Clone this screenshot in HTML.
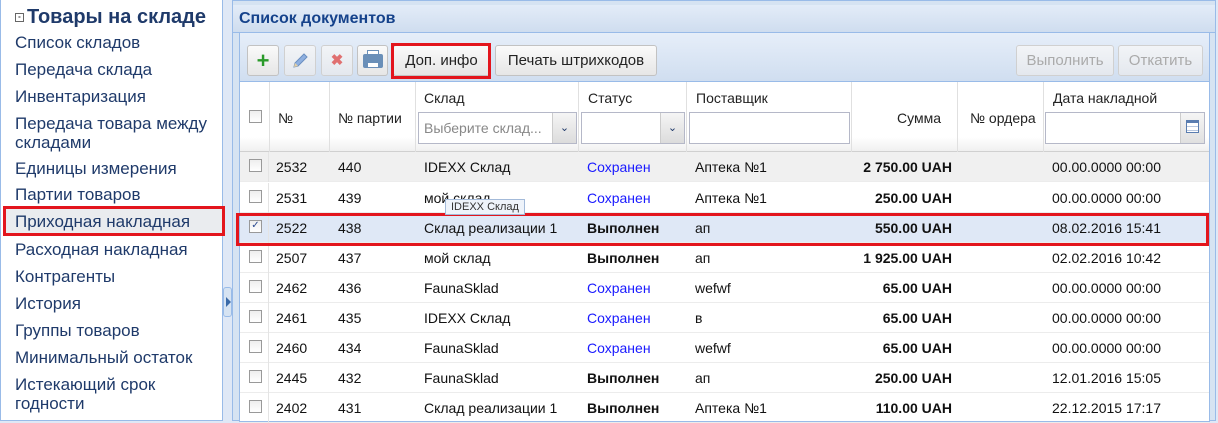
<!DOCTYPE html>
<html><head><meta charset="utf-8"><style>
*{box-sizing:border-box;margin:0;padding:0}
body{width:1218px;height:421px;overflow:hidden;background:#dfe8f6;font-family:"Liberation Sans",Arial,sans-serif;font-size:14px;position:relative}
.abs{position:absolute}
#side{left:0;top:0;width:223px;height:421px;background:#fff;border:1px solid #99bbe8;border-top:none}
.si{position:absolute;left:14px;color:#1f3a6a;font-size:17px;line-height:19px;white-space:nowrap}
#panel{left:232px;top:0;width:984px;height:421px;background:#d6e3f2;border:1px solid #99bbe8}
#ph{left:0;top:4px;width:982px;height:28px;background:linear-gradient(#e3ecf8,#cfddef);border-bottom:1px solid #99bbe8;font-weight:bold;color:#15428b;font-size:16px;padding:5px 6px}
#grid{left:6px;top:31px;width:971px;height:390px;background:#fff;border:1px solid #99bbe8}
#tb{left:0;top:0;width:969px;height:49px;background:linear-gradient(#e6eef9,#d0def0);border-bottom:1px solid #99bbe8}
.btn{position:absolute;top:12px;height:31px;border:1px solid #c2c2c2;border-radius:3px;background:linear-gradient(#fafafa,#e6e6e6);font-size:15px;color:#222;text-align:center;line-height:29px}
.dis{color:#aaa;border-color:#d0d0d0;background:linear-gradient(#f2f4f7,#e4e8ee)}
#hd{left:0;top:49px;width:969px;height:70px;background:linear-gradient(#fff 80%,#f0f0f0);border-bottom:1px solid #d0d0d0}
.hc{position:absolute;top:0;height:70px;border-left:1px solid #e0e0e0;font-size:14px;color:#222}
.inp{position:absolute;height:32px;border:1px solid #b5b8c8;background:#fff}
.trig{position:absolute;right:0;top:0;width:24px;height:30px;background:linear-gradient(#f5f5f5,#dcdcdc);border-left:1px solid #ccc;font-size:11px;color:#1f3a6a;text-align:center;line-height:30px}
.row{position:absolute;left:0;width:969px;height:30px;border-bottom:1px solid #ececec;font-size:14px;color:#111}
.row span{position:absolute;top:7px;white-space:nowrap}
.cb{position:absolute;left:9px;top:7px;width:13px;height:13px;border:1px solid #999;background:linear-gradient(#eee,#fff)}
.cs{position:absolute;left:28px;top:0;height:30px;border-left:1px solid #e4e4e4}
.blue{color:#1a1aff}
.b{font-weight:bold}
.red{position:absolute;border:3px solid #e3151d}
</style></head><body>
<div id="side" class="abs">
<div class="si" style="top:8px;font-weight:bold;font-size:20px;left:14px"><span style="display:inline-block;width:9px;height:9px;border:1px solid #666;font-size:8px;line-height:6px;text-align:center;vertical-align:middle;margin-right:3px;color:#333">-</span>Товары на складе</div>
<div class="si" style="top:33px">Список складов</div>
<div class="si" style="top:60px">Передача склада</div>
<div class="si" style="top:87px">Инвентаризация</div>
<div class="si" style="top:114px">Передача товара между<br>складами</div>
<div class="si" style="top:159px">Единицы измерения</div>
<div class="si" style="top:185px">Партии товаров</div>
<div class="abs" style="left:3px;top:207px;width:219px;height:28px;background:#eaecef"></div>
<div class="si" style="top:212px">Приходная накладная</div>
<div class="red" style="left:2px;top:206px;width:222px;height:30px"></div>
<div class="si" style="top:240px">Расходная накладная</div>
<div class="si" style="top:267px">Контрагенты</div>
<div class="si" style="top:294px">История</div>
<div class="si" style="top:321px">Группы товаров</div>
<div class="si" style="top:348px">Минимальный остаток</div>
<div class="si" style="top:375px">Истекающий срок<br>годности</div>
</div>
<div class="abs" style="left:223px;top:287px;width:9px;height:30px;background:#d6e3f2;border:1px solid #99bbe8;border-radius:3px"><div style="margin:9px 0 0 2px;width:0;height:0;border-left:5px solid #3a6aa8;border-top:5px solid transparent;border-bottom:5px solid transparent"></div></div>
<div id="panel" class="abs">
<div id="ph" class="abs">Список документов</div>
<div id="grid" class="abs">
<div id="tb" class="abs">
<div class="btn" style="left:7px;width:32px;color:#2a9a2a;font-weight:bold;font-size:22px">+</div>
<div class="btn dis" style="left:44px;width:32px"><svg width="18" height="18" viewBox="0 0 18 18" style="margin-top:6px"><path d="M3 15 L4 11 L13 2 L16 5 L7 14 Z" fill="#8fb0e0" stroke="#6a8fc0"/><path d="M3 15 L4 11 L7 14 Z" fill="#e8d0a0"/></svg></div>
<div class="btn dis" style="left:81px;width:32px;color:#e07070;font-weight:bold">✖</div>
<div class="btn" style="left:117px;width:31px"><div style="margin:8px auto 0;width:20px;height:14px;background:#6a8fb8;border-radius:2px;position:relative"><div style="position:absolute;left:4px;top:-4px;width:12px;height:5px;background:#fff;border:1px solid #6a8fb8"></div><div style="position:absolute;left:4px;top:8px;width:12px;height:6px;background:#fff;border:1px solid #6a8fb8"></div></div></div>
<div class="btn" style="left:153px;width:97px">Доп. инфо</div>
<div class="red" style="left:151px;top:10px;width:100px;height:36px"></div>
<div class="btn" style="left:255px;width:162px">Печать штрихкодов</div>
<div class="btn dis" style="left:776px;width:98px">Выполнить</div>
<div class="btn dis" style="left:878px;width:85px">Откатить</div>
</div>
<div id="hd" class="abs">
<div class="hc" style="left:0;width:29px;border:none"><div class="cb" style="top:28px;left:9px"></div></div>
<div class="hc" style="left:29px;width:60px;padding:28px 0 0 8px">№</div>
<div class="hc" style="left:89px;width:86px;padding:28px 0 0 8px">№ партии</div>
<div class="hc" style="left:175px;width:163px;padding:8px 0 0 8px">Склад<div class="inp" style="left:2px;top:30px;width:159px;color:#888;padding:7px 5px">Выберите склад...<div class="trig">⌄</div></div></div>
<div class="hc" style="left:338px;width:108px;padding:8px 0 0 9px">Статус<div class="inp" style="left:2px;top:30px;width:104px"><div class="trig">⌄</div></div></div>
<div class="hc" style="left:446px;width:165px;padding:8px 0 0 9px">Поставщик<div class="inp" style="left:2px;top:30px;width:161px"></div></div>
<div class="hc" style="left:611px;width:106px;padding:28px 16px 0 0;text-align:right">Сумма</div>
<div class="hc" style="left:717px;width:86px;padding:28px 0 0 12px">№ ордера</div>
<div class="hc" style="left:803px;width:163px;padding:8px 0 0 9px">Дата накладной<div class="inp" style="left:1px;top:30px;width:160px"><div class="trig" style="background:linear-gradient(#f5f5f5,#e0e0e0)"><div style="margin:7px auto;width:13px;height:13px;border:1px solid #5a7db0;background:repeating-linear-gradient(#fff 0 3px,#b8c8e0 3px 4px);border-top:3px solid #5a7db0"></div></div></div></div>
</div>
<div class="abs" style="left:0;top:119px;width:969px">
<div class="row" style="top:0;background:#f0f0f0"><div class="cb"></div><div class="cs"></div><span style="left:36px">2532</span><span style="left:98px">440</span><span style="left:184px">IDEXX Склад</span><span class="blue" style="left:347px">Сохранен</span><span style="left:455px">Аптека №1</span><span class="b" style="left:611px;width:101px;text-align:right">2 750.00 UAH</span><span style="left:812px">00.00.0000 00:00</span></div>
<div class="row" style="top:31px"><div class="cb"></div><div class="cs"></div><span style="left:36px">2531</span><span style="left:98px">439</span><span style="left:184px">мой склад</span><span class="blue" style="left:347px">Сохранен</span><span style="left:455px">Аптека №1</span><span class="b" style="left:611px;width:101px;text-align:right">250.00 UAH</span><span style="left:812px">00.00.0000 00:00</span></div>
<div class="row" style="top:61px;background:#dfe8f6"><div class="cb" style="font-size:10px;line-height:10px;color:#2a4a90;text-align:center">✓</div><div class="cs"></div><span style="left:36px">2522</span><span style="left:98px">438</span><span style="left:184px">Склад реализации 1</span><span class="b" style="left:347px">Выполнен</span><span style="left:455px">ап</span><span class="b" style="left:611px;width:101px;text-align:right">550.00 UAH</span><span style="left:812px">08.02.2016 15:41</span></div>
<div class="row" style="top:91px"><div class="cb"></div><div class="cs"></div><span style="left:36px">2507</span><span style="left:98px">437</span><span style="left:184px">мой склад</span><span class="b" style="left:347px">Выполнен</span><span style="left:455px">ап</span><span class="b" style="left:611px;width:101px;text-align:right">1 925.00 UAH</span><span style="left:812px">02.02.2016 10:42</span></div>
<div class="row" style="top:121px"><div class="cb"></div><div class="cs"></div><span style="left:36px">2462</span><span style="left:98px">436</span><span style="left:184px">FaunaSklad</span><span class="blue" style="left:347px">Сохранен</span><span style="left:455px">wefwf</span><span class="b" style="left:611px;width:101px;text-align:right">65.00 UAH</span><span style="left:812px">00.00.0000 00:00</span></div>
<div class="row" style="top:151px"><div class="cb"></div><div class="cs"></div><span style="left:36px">2461</span><span style="left:98px">435</span><span style="left:184px">IDEXX Склад</span><span class="blue" style="left:347px">Сохранен</span><span style="left:455px">в</span><span class="b" style="left:611px;width:101px;text-align:right">65.00 UAH</span><span style="left:812px">00.00.0000 00:00</span></div>
<div class="row" style="top:181px"><div class="cb"></div><div class="cs"></div><span style="left:36px">2460</span><span style="left:98px">434</span><span style="left:184px">FaunaSklad</span><span class="blue" style="left:347px">Сохранен</span><span style="left:455px">wefwf</span><span class="b" style="left:611px;width:101px;text-align:right">65.00 UAH</span><span style="left:812px">00.00.0000 00:00</span></div>
<div class="row" style="top:211px"><div class="cb"></div><div class="cs"></div><span style="left:36px">2445</span><span style="left:98px">432</span><span style="left:184px">FaunaSklad</span><span class="b" style="left:347px">Выполнен</span><span style="left:455px">ап</span><span class="b" style="left:611px;width:101px;text-align:right">250.00 UAH</span><span style="left:812px">12.01.2016 15:05</span></div>
<div class="row" style="top:241px"><div class="cb"></div><div class="cs"></div><span style="left:36px">2402</span><span style="left:98px">431</span><span style="left:184px">Склад реализации 1</span><span class="b" style="left:347px">Выполнен</span><span style="left:455px">Аптека №1</span><span class="b" style="left:611px;width:101px;text-align:right">110.00 UAH</span><span style="left:812px">22.12.2015 17:17</span></div>
</div>
<div class="red" style="left:-4px;top:180px;width:973px;height:33px"></div>
<div class="abs" style="left:205px;top:166px;padding:1px 5px;background:#eef3fa;border:1px solid #a3bad9;font-size:11px;color:#333">IDEXX Склад</div>
</div>
</div>
</body></html>
